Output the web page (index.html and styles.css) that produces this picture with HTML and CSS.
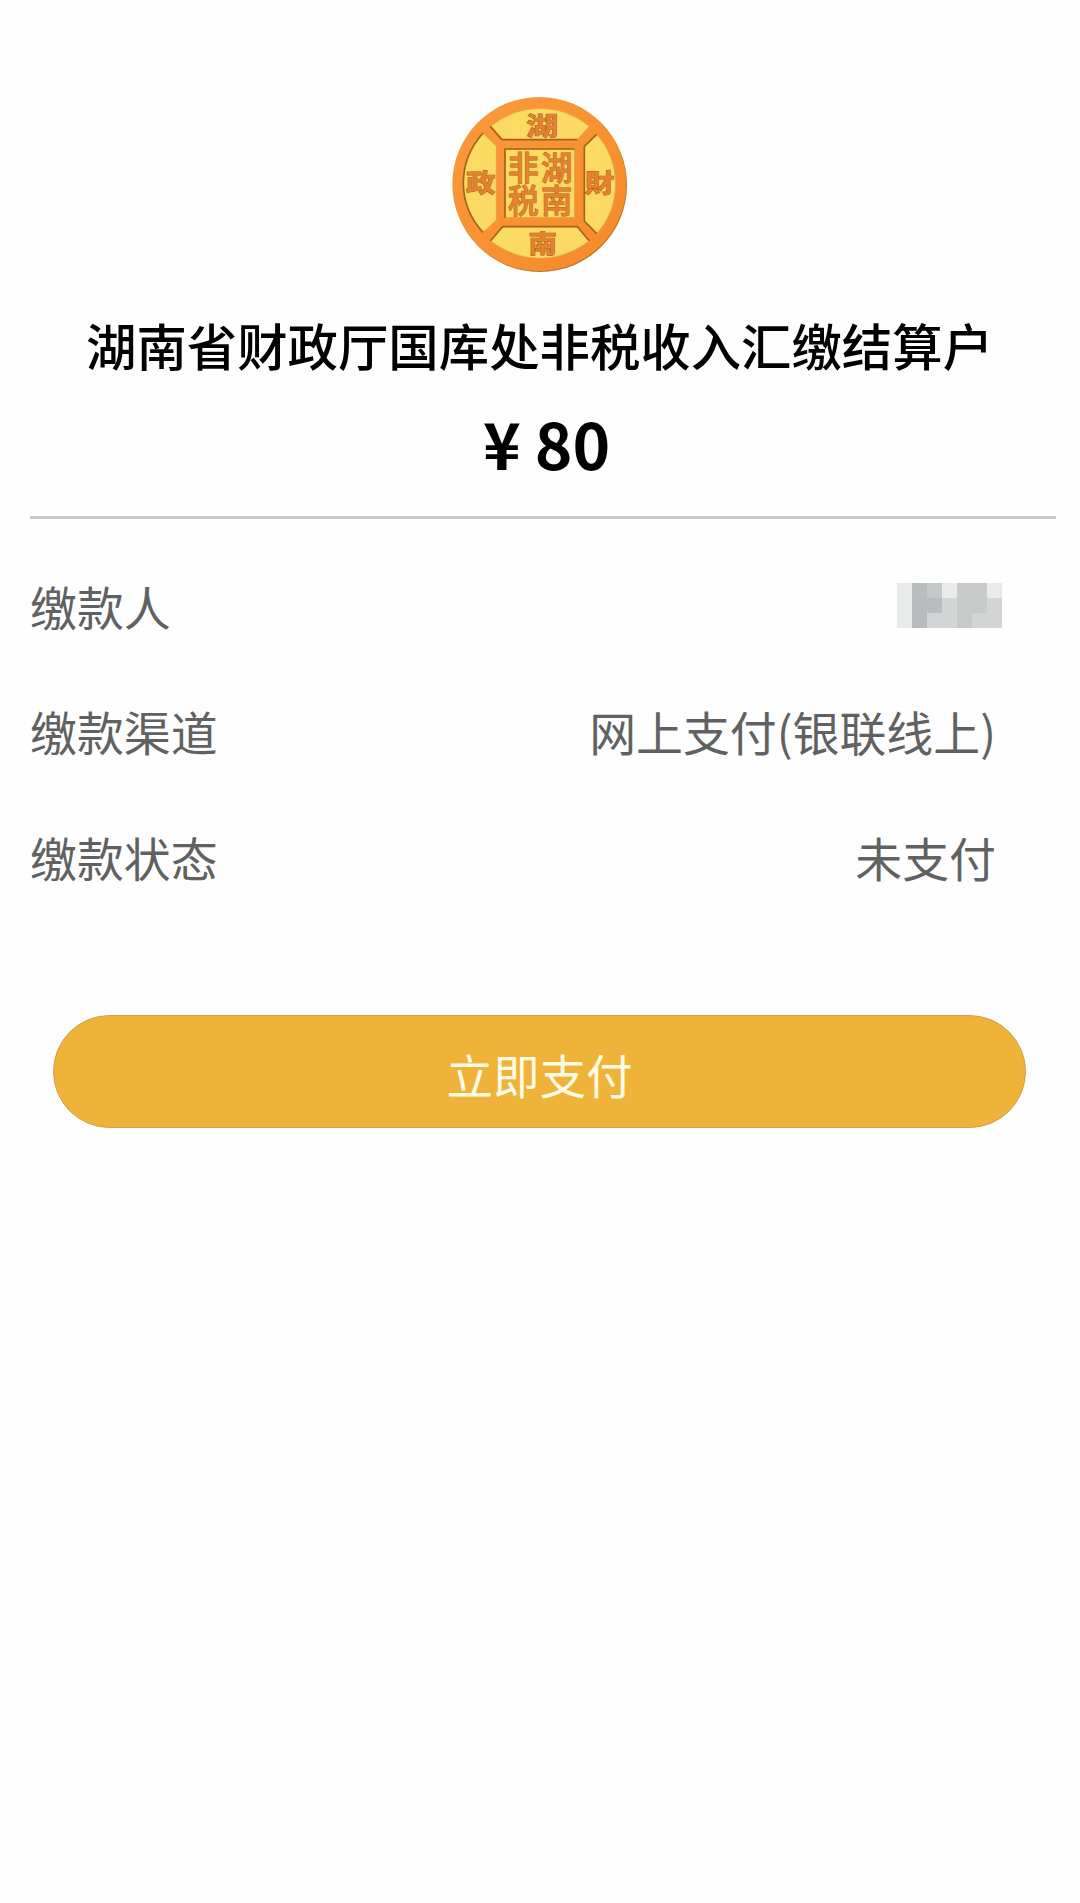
FILE: index.html
```html
<!DOCTYPE html>
<html lang="zh-CN">
<head>
<meta charset="utf-8">
<title>缴款</title>
<link rel="stylesheet" href="styles.css">
</head>
<body>
<main class="page">
  <svg class="coin" viewBox="0 0 600 600" aria-hidden="true">
    <defs>
      <linearGradient id="rim" x1="0" y1="0" x2="1" y2="1">
        <stop offset="0" stop-color="#fb9a3c"/>
        <stop offset="1" stop-color="#f58a28"/>
      </linearGradient>
      <linearGradient id="field" x1="0" y1="0" x2="1" y2="1">
        <stop offset="0" stop-color="#fbdc62"/>
        <stop offset="1" stop-color="#fcd866"/>
      </linearGradient>
    </defs>
    <circle cx="300" cy="300" r="261" fill="#b9702a"/>
    <circle cx="298" cy="297" r="261" fill="url(#rim)"/>
    <g class="panel" fill="url(#field)">
      <path d="M151 124Q218 70 300 70T448 124L412 164H186Z"/>
      <path d="M151 468L188 425H412L448 468Q380 520 300 520T151 468Z"/>
      <path d="M129 144L169 184V406L129 442Q70 378 70 294T129 144Z"/>
      <path d="M470 148L433 184V408L470 446Q527 384 527 298T470 148Z"/>
      <rect x="195" y="192" width="209" height="206"/>
    </g>
    <g class="edge">
      <path d="M151 124L186 164M186 164H412M129 442Q70 378 70 294T129 144M151 468L188 425H412L448 468M433 408V184L470 148M433 408L470 446M195 398V192H404"/>
    </g>
    <g class="legend">
      <text transform="translate(306 149) scale(1.25 1)">湖</text>
      <text transform="translate(308 505) scale(1.12 1)">南</text>
      <text transform="translate(122 322) scale(1.16 1)">政</text>
      <text transform="translate(478 322) scale(1.16 1)">財</text>
    </g>
    <g class="seal">
      <text transform="translate(350 196) scale(.94 1)">湖南</text>
      <text transform="translate(250 196) scale(.92 1)">非税</text>
    </g>
  </svg>
  <h1 class="payee">湖南省财政厅国库处非税收入汇缴结算户</h1>
  <p class="amount"><span class="yen">¥</span><span>80</span></p>
  <dl class="details">
    <div class="row">
      <dt>缴款人</dt>
      <dd>
        <div class="mosaic">
          <i class="a"></i><i class="e"></i><i class="d"></i><i class="a"></i><i class="c"></i><i class="c"></i><i class="a"></i>
          <i class="a"></i><i class="f"></i><i class="e"></i><i class="b"></i><i class="c"></i><i class="c"></i><i class="b"></i>
          <i class="a"></i><i class="f"></i><i class="b"></i><i class="b"></i><i class="c"></i><i class="b"></i><i class="b"></i>
        </div>
      </dd>
    </div>
    <div class="row"><dt>缴款渠道</dt><dd>网上支付(银联线上)</dd></div>
    <div class="row"><dt>缴款状态</dt><dd>未支付</dd></div>
  </dl>
  <button class="pay" type="button">立即支付</button>
</main>
</body>
</html>
```
FILE: styles.css
```css
* {
  box-sizing: border-box;
}

body {
  margin: 0;
  background: #fefefe;
  font-family: "Noto Sans CJK SC", sans-serif;
}

.page {
  display: flex;
  flex-direction: column;
  min-height: 1903px;
  padding: 85px 24px 0 30px;
}

.coin {
  width: 200px;
  height: 200px;
  margin-left: 410px;
}

.panel {
  stroke: #d9a03e;
  stroke-width: 2;
}

.edge {
  fill: none;
  stroke: #a8601c;
  stroke-width: 5;
}

.legend,
.seal {
  font-family: "Noto Sans CJK TC", sans-serif;
  fill: #e8812e;
  stroke: #a85e1c;
  stroke-width: 3;
  paint-order: stroke;
}

.legend {
  font-size: 76px;
  font-weight: 700;
  text-anchor: middle;
}

.seal {
  font-size: 100px;
  font-weight: 500;
  writing-mode: vertical-rl;
}

.payee {
  margin: 23px 0 0 56px;
  font-size: 50.4px;
  font-weight: 500;
  line-height: 74px;
  white-space: nowrap;
  color: #000;
}

.amount {
  display: flex;
  gap: 14px;
  margin: 20px 0 0 453px;
  font-size: 64px;
  font-weight: 700;
  line-height: 80px;
  color: #000;
}

.details {
  margin: 34px 0 0;
  padding-top: 24px;
  border-top: 3px solid #c6c9c8;
  font-size: 46.9px;
  color: #606262;
}

.row {
  display: flex;
  justify-content: space-between;
  align-items: center;
  height: 125.5px;
  padding-right: 60px;
}

.row dd {
  margin: 0;
}

.mosaic {
  display: grid;
  grid-template-columns: repeat(7, 15px);
  grid-auto-rows: 15px;
  margin: 0 -6px 0 0;
}

.a { background: #e9eaea; }
.b { background: #d3d4d5; }
.c { background: #c8c9c9; }
.d { background: #c5c9c9; }
.e { background: #b9bdbe; }
.f { background: #b8babb; }

.pay {
  height: 113px;
  margin: 95px 30px 0 23px;
  padding: 5px 0 0;
  border: 1px solid #cfa04a;
  border-radius: 57px;
  background: #f0b33a;
  color: #fffbe6;
  font: 400 46.5px/60px "Noto Sans CJK SC", sans-serif;
}
```
